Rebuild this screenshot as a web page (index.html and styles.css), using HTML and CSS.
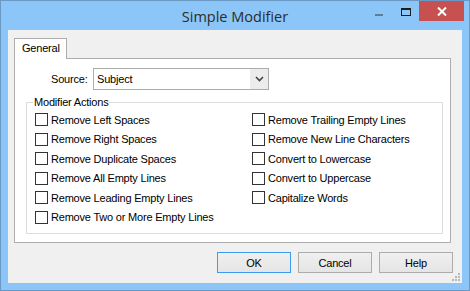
FILE: index.html
```html
<!DOCTYPE html>
<html lang="en">
<head>
    <meta charset="UTF-8">
    <title>Simple Modifier</title>
    <link rel="stylesheet" href="styles.css">
</head>
<body>
    <div class="window">
        <div class="titlebar">
            <div class="title">Simple Modifier</div>
            <div class="controls">
                <span class="btn-min"></span>
                <span class="btn-max"></span>
                <span class="btn-close">
                    <svg width="10" height="9" viewBox="0 0 10 9"><path d="M1 0.5 L9 8.5 M9 0.5 L1 8.5" stroke="#fff" stroke-width="2"/></svg>
                </span>
            </div>
        </div>
        <div class="client">
            <div class="tabs">
                <div class="tab active">General</div>
            </div>
            <div class="panel">
                <div class="source-row">
                    <label class="source-label">Source:</label>
                    <div class="select">
                        <span class="select-value">Subject</span>
                        <span class="select-arrow">
                            <svg width="9" height="6" viewBox="0 0 9 6"><path d="M1 1 L4.5 4.5 L8 1" fill="none" stroke="#444" stroke-width="1.6"/></svg>
                        </span>
                    </div>
                </div>
                <fieldset class="group">
                    <legend>Modifier Actions</legend>
                    <div class="checks">
                        <label class="check"><span class="box"></span>Remove Left Spaces</label>
                        <label class="check"><span class="box"></span>Remove Trailing Empty Lines</label>
                        <label class="check"><span class="box"></span>Remove Right Spaces</label>
                        <label class="check"><span class="box"></span>Remove New Line Characters</label>
                        <label class="check"><span class="box"></span>Remove Duplicate Spaces</label>
                        <label class="check"><span class="box"></span>Convert to Lowercase</label>
                        <label class="check"><span class="box"></span>Remove All Empty Lines</label>
                        <label class="check"><span class="box"></span>Convert to Uppercase</label>
                        <label class="check"><span class="box"></span>Remove Leading Empty Lines</label>
                        <label class="check"><span class="box"></span>Capitalize Words</label>
                        <label class="check"><span class="box"></span>Remove Two or More Empty Lines</label>
                    </div>
                </fieldset>
            </div>
            <div class="buttons">
                <button class="default">OK</button>
                <button>Cancel</button>
                <button>Help</button>
            </div>
            <div class="grip">
                <svg width="8" height="8" viewBox="0 0 8 8" fill="#b8b8b8">
                    <rect x="6" y="0" width="2" height="2"/>
                    <rect x="3" y="3" width="2" height="2"/>
                    <rect x="6" y="3" width="2" height="2"/>
                    <rect x="0" y="6" width="2" height="2"/>
                    <rect x="3" y="6" width="2" height="2"/>
                    <rect x="6" y="6" width="2" height="2"/>
                </svg>
            </div>
        </div>
    </div>
</body>
</html>
```

FILE: styles.css
```css
* { margin: 0; padding: 0; box-sizing: border-box; }
body {
    font-family: 'Liberation Sans', Arial, sans-serif;
    font-size: 11px;
    letter-spacing: -0.2px;
    color: #000;
    background: #fff;
}
.window {
    width: 470px;
    height: 291px;
    background: #8cc6f8;
    border: 1px solid #6a98c4;
    display: flex;
    flex-direction: column;
}
.titlebar {
    height: 29px;
    position: relative;
    display: flex;
    justify-content: center;
    align-items: center;
}
.title {
    font-family: 'Open Sans', sans-serif;
    font-size: 14.5px;
    letter-spacing: 0;
    color: #2b2b2b;
    padding-top: 1px;
}
.controls {
    position: absolute;
    top: 0;
    right: 5px;
    display: flex;
    align-items: flex-start;
}
.btn-min {
    width: 8px;
    height: 2px;
    background: #5f7d99;
    margin: 13px 18px 0 0;
}
.btn-max {
    width: 10px;
    height: 8px;
    border: 1px solid #1e1e1e;
    border-top-width: 2px;
    margin: 7px 8px 0 0;
}
.btn-close {
    width: 45px;
    height: 20px;
    background: #c75050;
    display: flex;
    align-items: center;
    justify-content: center;
}
.client {
    flex: 1;
    margin: 0 7px 7px 7px;
    background: #f0f0f0;
    padding: 8px 0 0 6px;
    position: relative;
}
.tabs { display: flex; }
.tab {
    width: 53px;
    height: 21px;
    background: #fff;
    border: 1px solid #adadad;
    border-bottom: none;
    padding: 3px 0 0 7px;
    margin-bottom: -1px;
    position: relative;
}
.panel {
    width: 437px;
    height: 185px;
    background: #fff;
    border: 1px solid #adadad;
    padding: 9px 0 0 0;
}
.source-row {
    display: flex;
    align-items: center;
    padding-left: 36px;
}
.source-label { width: 42px; }
.select {
    width: 176px;
    height: 22px;
    border: 1px solid #acacac;
    display: flex;
    align-items: center;
    justify-content: space-between;
}
.select-value { padding-left: 3px; }
.select-arrow {
    width: 18px;
    height: 20px;
    background: #ececec;
    display: flex;
    align-items: center;
    justify-content: center;
}
.group {
    margin: 6px 0 0 11px;
    width: 417px;
    height: 138px;
    border: 1px solid #dcdcdc;
    padding: 2px 0 0 8px;
}
.group legend {
    margin-left: -2px;
    padding: 0 1px;
}
.checks {
    display: grid;
    grid-template-columns: 217px 1fr;
    grid-auto-rows: 19.5px;
}
.check {
    display: flex;
    align-items: center;
    white-space: nowrap;
}
.box {
    width: 13px;
    height: 13px;
    border: 1px solid #333;
    background: #fff;
    margin-right: 3px;
}
.buttons {
    display: flex;
    justify-content: flex-end;
    gap: 7px;
    margin: 9px 9px 0 0;
}
button {
    width: 74px;
    height: 21px;
    font-family: 'Liberation Sans', Arial, sans-serif;
    font-size: 11px;
    letter-spacing: -0.2px;
    color: #000;
    background: linear-gradient(#f0f0f0, #e5e5e5);
    border: 1px solid #acacac;
}
button.default { border-color: #3c9af0; }
.grip {
    position: absolute;
    right: 2px;
    bottom: 2px;
    line-height: 0;
}
```
